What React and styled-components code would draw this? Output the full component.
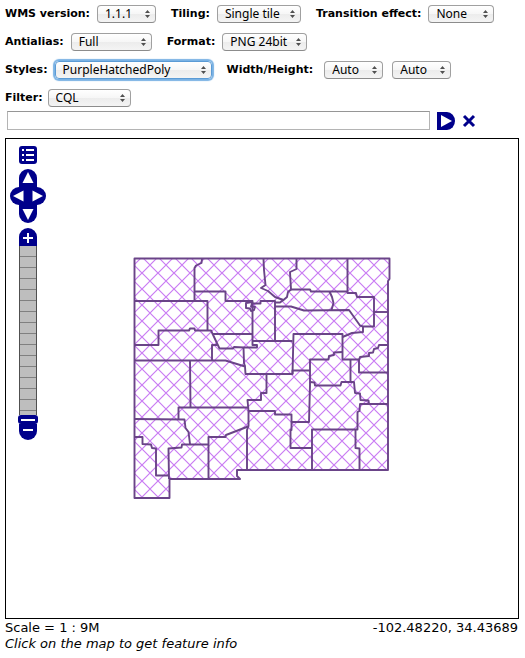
import React from "react";
import styled, { createGlobalStyle, css } from "styled-components";

const NAVY = "#00008b";

const GlobalStyle = createGlobalStyle`
  * { box-sizing: border-box; }
  body {
    margin: 0;
    background: #fff;
    color: #000;
    font-family: "DejaVu Sans", Verdana, sans-serif;
    font-size: 13px;
  }
`;

const Page = styled.main`
  padding: 5px 6px 6px 5px;
`;

const Toolbar = styled.form`
  display: flex;
  flex-direction: column;
  gap: 10px;
  margin-bottom: 4px;
`;

const ToolRow = styled.div`
  display: flex;
  align-items: center;
  gap: 15px;
`;

const Field = styled.div`
  display: flex;
  align-items: center;
  gap: ${(p) => p.$gap || 7}px;
`;

const FieldLabel = styled.label`
  font-size: 11px;
  line-height: 18px;
  font-weight: bold;
  white-space: nowrap;
`;

const SelectFrame = styled.span`
  position: relative;
  display: flex;
  width: ${(p) => p.$width}px;
`;

const SelectBox = styled.select`
  appearance: none;
  width: 100%;
  height: 18px;
  margin: 0;
  padding: 0 14px 0 7px;
  border: 1px solid #a0a0a0;
  border-bottom-color: #8c8c8c;
  border-radius: 4px;
  outline: none;
  background: linear-gradient(#fff, #f6f6f6 50%, #ececec 51%, #f4f4f4);
  color: #000;
  font-family: "Noto Sans", "Open Sans", sans-serif;
  font-size: 12px;
  line-height: 16px;
  ${(p) =>
    p.$active &&
    css`
      border-color: #5b9bd5;
      box-shadow: 0 0 1px 2px #7ab2e4;
    `}
`;

const Stepper = styled.svg`
  position: absolute;
  right: 6px;
  top: 5px;
  width: 5px;
  height: 8px;
  pointer-events: none;
`;

const FilterRow = styled.div`
  display: flex;
  align-items: center;
  padding-left: 2px;
  margin-bottom: 8px;
`;

const FilterInput = styled.input`
  flex: 1;
  min-width: 0;
  height: 19px;
  margin: 0 7px 0 0;
  padding: 1px 3px;
  border: 1px solid #b4b4b4;
  border-top-color: #969696;
  border-radius: 0;
  outline: none;
  background: #fff;
  font: inherit;
`;

const FilterActions = styled.div`
  display: flex;
  align-items: center;
  gap: 7px;
  padding-right: 43px;
`;

const IconButton = styled.button`
  display: block;
  padding: 0;
  border: 0;
  background: none;
  cursor: pointer;
  line-height: 0;
  svg { display: block; }
`;

const MapPanel = styled.section`
  position: relative;
  display: flex;
  align-items: center;
  justify-content: center;
  padding: 111px 0 112px;
  border: 1px solid #000;
`;

const MapControls = styled.div`
  position: absolute;
  left: 4px;
  top: 7px;
  display: flex;
  flex-direction: column;
  align-items: center;
`;

const PanPad = styled.div`
  display: grid;
  grid-template-columns: repeat(4, 9px);
  grid-template-rows: repeat(3, 18px);
  margin: 5px 0;
`;

const PanButton = styled(IconButton)`
  grid-column: ${(p) => p.$column};
  grid-row: ${(p) => p.$row};
`;

const ZoomTrack = styled.div`
  width: 18px;
  height: 169px;
  border: 1px solid #505050;
  border-width: 0 1px;
  background: repeating-linear-gradient(#bebebe 0 10px, #808080 10px 11px);
`;

const ZoomThumb = styled.div`
  display: flex;
  align-items: center;
  justify-content: center;
  width: 20px;
  height: 9px;
  border-radius: 3px;
  background: ${NAVY};
  &::after {
    content: "";
    width: 14px;
    height: 2px;
    background: #fff;
  }
`;

const StatusBar = styled.footer`
  display: flex;
  flex-wrap: wrap;
  justify-content: space-between;
  padding: 1px 1px 0 0;
  line-height: 16px;
`;

const Hint = styled.em`
  flex-basis: 100%;
`;

function Dropdown({ id, label, value, width, active }) {
  return (
    <SelectFrame $width={width}>
      <SelectBox id={id} aria-label={label} defaultValue={value} $active={active}>
        <option>{value}</option>
      </SelectBox>
      <Stepper viewBox="0 0 5 8" aria-hidden="true">
        <path d="M2.5 0 5 3H0zM2.5 8 0 5h5z" fill="#505050" />
      </Stepper>
    </SelectFrame>
  );
}

function LabelledSelect({ id, label, gap, ...rest }) {
  return (
    <Field $gap={gap}>
      <FieldLabel htmlFor={id}>{label}</FieldLabel>
      <Dropdown id={id} {...rest} />
    </Field>
  );
}

const PAN = [
  { name: "Pan up", column: "2 / 4", row: 1, body: "M0 18V9a9 9 0 0 1 18 0v9z", arrow: "M9 3 14.5 14h-11z" },
  { name: "Pan left", column: "1 / 3", row: 2, body: "M18 0H9a9 9 0 0 0 0 18h9z", arrow: "M3 9 13.5 3.5v11z" },
  { name: "Pan right", column: "3 / 5", row: 2, body: "M0 0h9a9 9 0 0 1 0 18H0z", arrow: "M15 9 4.5 3.5v11z" },
  { name: "Pan down", column: "2 / 4", row: 3, body: "M0 0v9a9 9 0 0 0 18 0V0z", arrow: "M9 15 14.5 4h-11z" },
];

const STATE_OUTLINE =
  "M134.500 258.500H389.500V279L388 281V470H237V476L240 479H169.500V498H134.500Z";

const COUNTY_LINES = [
  "M202 259L201.500 263 196 265.500 194.500 268V301",
  "M195 291.500H225.500V301H252.500V345H257V347.500H244L234 347 233 348.500H219.500L211 330.500H195L194.500 328.500H190L189 330.500H158.500V345H134",
  "M134 301H207.500V330",
  "M212 334H252.500",
  "M217 345H212V360.500",
  "M134 360.500H225.500L245 366.500 245.500 374H292.500V370.500H310",
  "M190 360.500L190.500 407",
  "M243.500 347L244 363 245 366.500",
  "M252.500 302L246 303V308L250 308.500 251 311 254 310 255 307 251 306.500 252.500 302",
  "M252.500 303.500H260.500V301H275V341",
  "M253 341H292.500",
  "M263.500 259L264 270 265.500 285 261 288 268 291 275 297 283.500 300",
  "M296.500 259V269L290 272 291 289.500 288 292 287 297 283.500 300 280 302.500H275",
  "M291 289.500H310L311 291.500H347.500",
  "M347.500 259V293H356L357 297H374V326.500H363L360 325.500 349 310 304 310.500 291 306.500H275",
  "M329.500 291.500L332 297 333.500 303 331.500 310",
  "M363 326.500V332L352 333 342.500 337",
  "M374 312H388",
  "M292.500 374L293.500 334H342.500V359.500H359",
  "M342.500 352L334 352.500V355L329 356 328.500 359.500H310V385L309 422H291.500",
  "M350.500 359.500V382",
  "M388 345H379L378 348 374 349 373 352.500 369 353V356L360 357 359 360V372.500H388",
  "M266.500 374V393H261V400H247.500L248.500 411V426L247 430V470",
  "M248 411H275V414.500H291.500V430H290.500V448H312",
  "M310 382L314.500 382.500 315 385.500H340.500L341.500 382H354L355 393 360 393.500 360.500 400 368.500 400.500 369 404",
  "M388 404H360L359.500 411 357.500 412V429.500H312V470",
  "M355.500 429.500V448L359.500 448.500V470",
  "M134 419L184.500 419.500 185.500 428 188.500 432 190 444",
  "M178.500 419V407.500H248",
  "M134 437H142.500V444L151 444.500 152 448 156 448.500V475.500H169",
  "M208 444.500H182L181.500 447.500 168.500 448.500 169 479",
  "M208.500 479V437H225.500L226 435 248 426.500",
];

function CountyMap() {
  return (
    <svg width="264" height="256" viewBox="130 250 264 256" role="img" aria-label="County map">
      <defs>
        <pattern id="hatch" x="142" y="257" width="16" height="16" patternUnits="userSpaceOnUse">
          <path
            d="M-1 -1 17 17M17 -1 -1 17M-1 1 1 -1M15 17 17 15M15 -1 17 1M-1 15 1 17"
            stroke="#c97bf3"
            strokeWidth="1.2"
          />
        </pattern>
      </defs>
      <path d={STATE_OUTLINE} fill="url(#hatch)" />
      <g fill="none" stroke="#6a4488" strokeWidth="1.9" strokeLinejoin="round">
        <path d={STATE_OUTLINE} />
        {COUNTY_LINES.map((d) => (
          <path key={d} d={d} />
        ))}
      </g>
    </svg>
  );
}

export default function App() {
  return (
    <>
      <GlobalStyle />
      <Page>
        <Toolbar>
          <ToolRow>
            <LabelledSelect id="version" label="WMS version:" value="1.1.1" width={59} />
            <LabelledSelect id="tiling" label="Tiling:" value="Single tile" width={84} />
            <LabelledSelect id="transition" label="Transition effect:" value="None" width={66} />
          </ToolRow>
          <ToolRow>
            <LabelledSelect id="antialias" label="Antialias:" value="Full" width={81} />
            <LabelledSelect id="format" label="Format:" value="PNG 24bit" width={85} />
          </ToolRow>
          <ToolRow>
            <LabelledSelect id="styles" label="Styles:" value="PurpleHatchedPoly" width={157} active />
            <Field $gap={9}>
              <LabelledSelect id="width" label="Width/Height:" value="Auto" width={59} gap={11} />
              <Dropdown id="height" label="Height" value="Auto" width={59} />
            </Field>
          </ToolRow>
          <ToolRow>
            <LabelledSelect id="filter" label="Filter:" value="CQL" width={83} gap={5} />
          </ToolRow>
        </Toolbar>
        <FilterRow>
          <FilterInput type="text" aria-label="Filter expression" />
          <FilterActions>
            <IconButton type="button" aria-label="Apply filter">
              <svg width="18" height="18" viewBox="0 0 18 18">
                <path d="M0 0h10a8 9 0 0 1 0 18H0z" fill={NAVY} />
                <path d="M4 3v12l11-6z" fill="#fff" />
              </svg>
            </IconButton>
            <IconButton type="button" aria-label="Reset filter">
              <svg width="14" height="14" viewBox="0 0 14 14">
                <path d="M2 2l10 10M12 2 2 12" stroke={NAVY} strokeWidth="3" />
              </svg>
            </IconButton>
          </FilterActions>
        </FilterRow>
        <MapPanel aria-label="Map">
          <CountyMap />
          <MapControls>
            <IconButton type="button" aria-label="Toggle options">
              <svg width="18" height="18" viewBox="0 0 18 18">
                <rect width="18" height="18" rx="3" fill={NAVY} />
                <path d="M3 3h2v2H3zM3 8h2v2H3zM3 13h2v2H3zM7 3h8v2H7zM7 8h8v2H7zM7 13h8v2H7z" fill="#fff" />
              </svg>
            </IconButton>
            <PanPad>
              {PAN.map((p) => (
                <PanButton key={p.name} type="button" aria-label={p.name} $column={p.column} $row={p.row}>
                  <svg width="18" height="18" viewBox="0 0 18 18">
                    <path d={p.body} fill={NAVY} />
                    <path d={p.arrow} fill="#fff" />
                  </svg>
                </PanButton>
              ))}
            </PanPad>
            <IconButton type="button" aria-label="Zoom in">
              <svg width="18" height="18" viewBox="0 0 18 18">
                <path d="M0 18V9a9 9 0 0 1 18 0v9z" fill={NAVY} />
                <path d="M8 5h2v4h4v2h-4v4H8v-4H4V9h4z" fill="#fff" />
              </svg>
            </IconButton>
            <ZoomTrack />
            <ZoomThumb />
            <IconButton type="button" aria-label="Zoom out">
              <svg width="18" height="16" viewBox="0 0 18 16">
                <path d="M0 0v7a9 9 0 0 0 18 0V0z" fill={NAVY} />
                <path d="M4 5h10v2H4z" fill="#fff" />
              </svg>
            </IconButton>
          </MapControls>
        </MapPanel>
        <StatusBar>
          <span>Scale = 1 : 9M</span>
          <span>-102.48220, 34.43689</span>
          <Hint>Click on the map to get feature info</Hint>
        </StatusBar>
      </Page>
    </>
  );
}
